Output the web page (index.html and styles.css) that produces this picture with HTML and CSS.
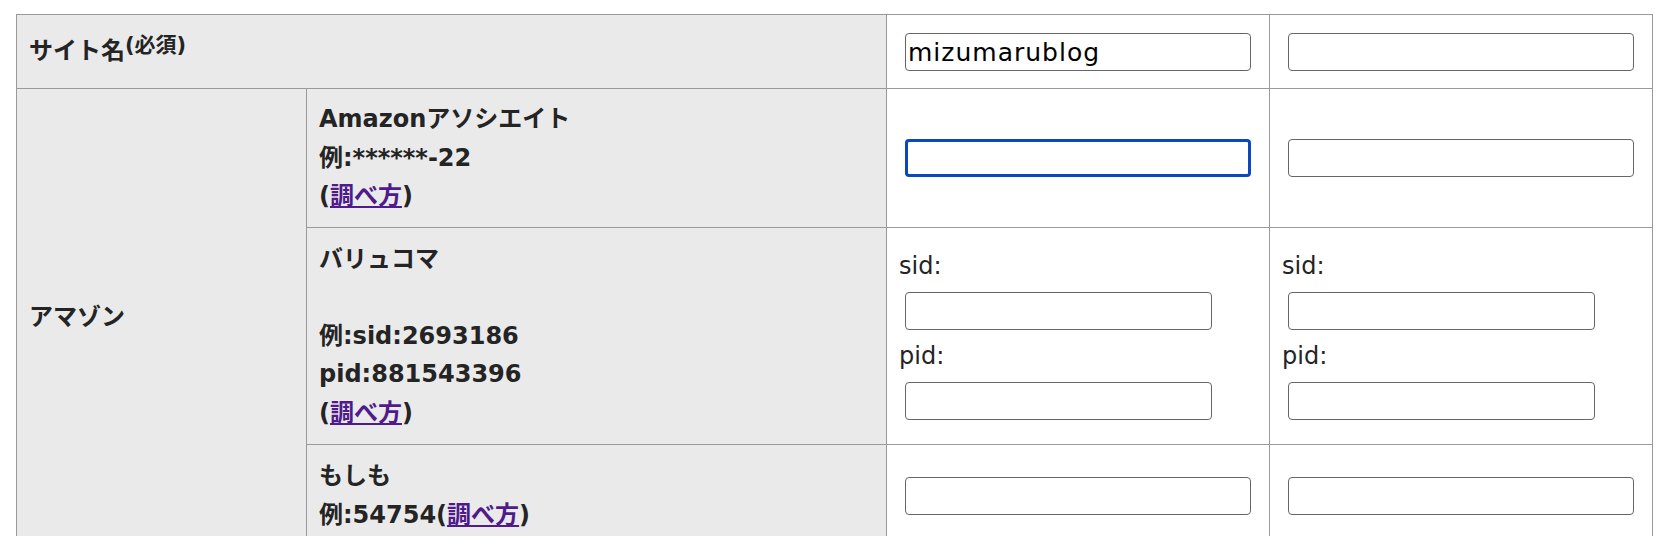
FILE: index.html
```html
<!DOCTYPE html>
<html lang="ja">
<head>
  <meta charset="UTF-8">
  <title>アフィリエイト設定</title>
  <link rel="stylesheet" href="styles.css">
</head>
<body>

<table class="settings">
  <colgroup>
    <col class="col-group">
    <col class="col-name">
    <col class="col-val">
    <col class="col-val">
  </colgroup>
  <tr class="row-site">
    <th colspan="2">サイト名<sup>(必須)</sup></th>
    <td><input type="text" class="field" value="mizumarublog"></td>
    <td><input type="text" class="field"></td>
  </tr>
  <tr class="row-amazon">
    <th rowspan="3">アマゾン</th>
    <th>Amazonアソシエイト<br>例:******-22<br>(<a href="#">調べ方</a>)</th>
    <td><input type="text" class="field is-focus"></td>
    <td><input type="text" class="field"></td>
  </tr>
  <tr>
    <th>バリュコマ<br><br>例:sid:2693186<br>pid:881543396<br>(<a href="#">調べ方</a>)</th>
    <td>
      <span class="sub-label">sid:</span>
      <input type="text" class="field field-short">
      <span class="sub-label sub-label-next">pid:</span>
      <input type="text" class="field field-short">
    </td>
    <td>
      <span class="sub-label">sid:</span>
      <input type="text" class="field field-short">
      <span class="sub-label sub-label-next">pid:</span>
      <input type="text" class="field field-short">
    </td>
  </tr>
  <tr>
    <th>もしも<br>例:54754(<a href="#">調べ方</a>)</th>
    <td><input type="text" class="field"></td>
    <td><input type="text" class="field"></td>
  </tr>
</table>

</body>
</html>
```

FILE: styles.css
```css
body {
  margin: 0;
  padding: 14px 16px;
  font-family: "DejaVu Sans", "Noto Sans CJK JP", sans-serif;
  color: #242424;
  background: #fff;
}
.settings {
  border-collapse: collapse;
  table-layout: fixed;
  width: 1637px;
  font-size: 24px;
  line-height: 38.5px;
}
.col-group { width: 290px; }
.col-name { width: 580px; }
.col-val { width: 383px; }
.settings th, .settings td {
  border: 1px solid #9a9a9a;
  padding: 12px;
  text-align: left;
  vertical-align: middle;
}
.row-amazon th, .row-amazon td {
  padding-top: 11px;
  padding-bottom: 11px;
}
.settings th {
  background: #eaeaea;
  font-weight: bold;
}
.settings td {
  background: #fff;
}
.settings sup {
  font-size: 21px;
  line-height: 0;
  vertical-align: 7px;
}
.settings a {
  color: #4f1a8c;
  text-decoration: underline;
}
.field {
  display: block;
  box-sizing: border-box;
  width: calc(100% - 12px);
  height: 38px;
  margin: 5px 6px;
  padding: 0 2px;
  border: 1px solid #666;
  border-radius: 4px;
  background: #fff;
  font-family: "DejaVu Sans", sans-serif;
  font-size: 25px;
  letter-spacing: 1px;
  color: #000;
  outline: none;
}
.row-site .field {
  margin-top: 6px;
}
.field.is-focus {
  border: 3px solid #0b47c0;
}
.field-short {
  width: 307px;
  margin: 11px 6px 0;
}
.sub-label {
  display: block;
  line-height: 30px;
}
.sub-label-next {
  margin-top: 11px;
}
```
